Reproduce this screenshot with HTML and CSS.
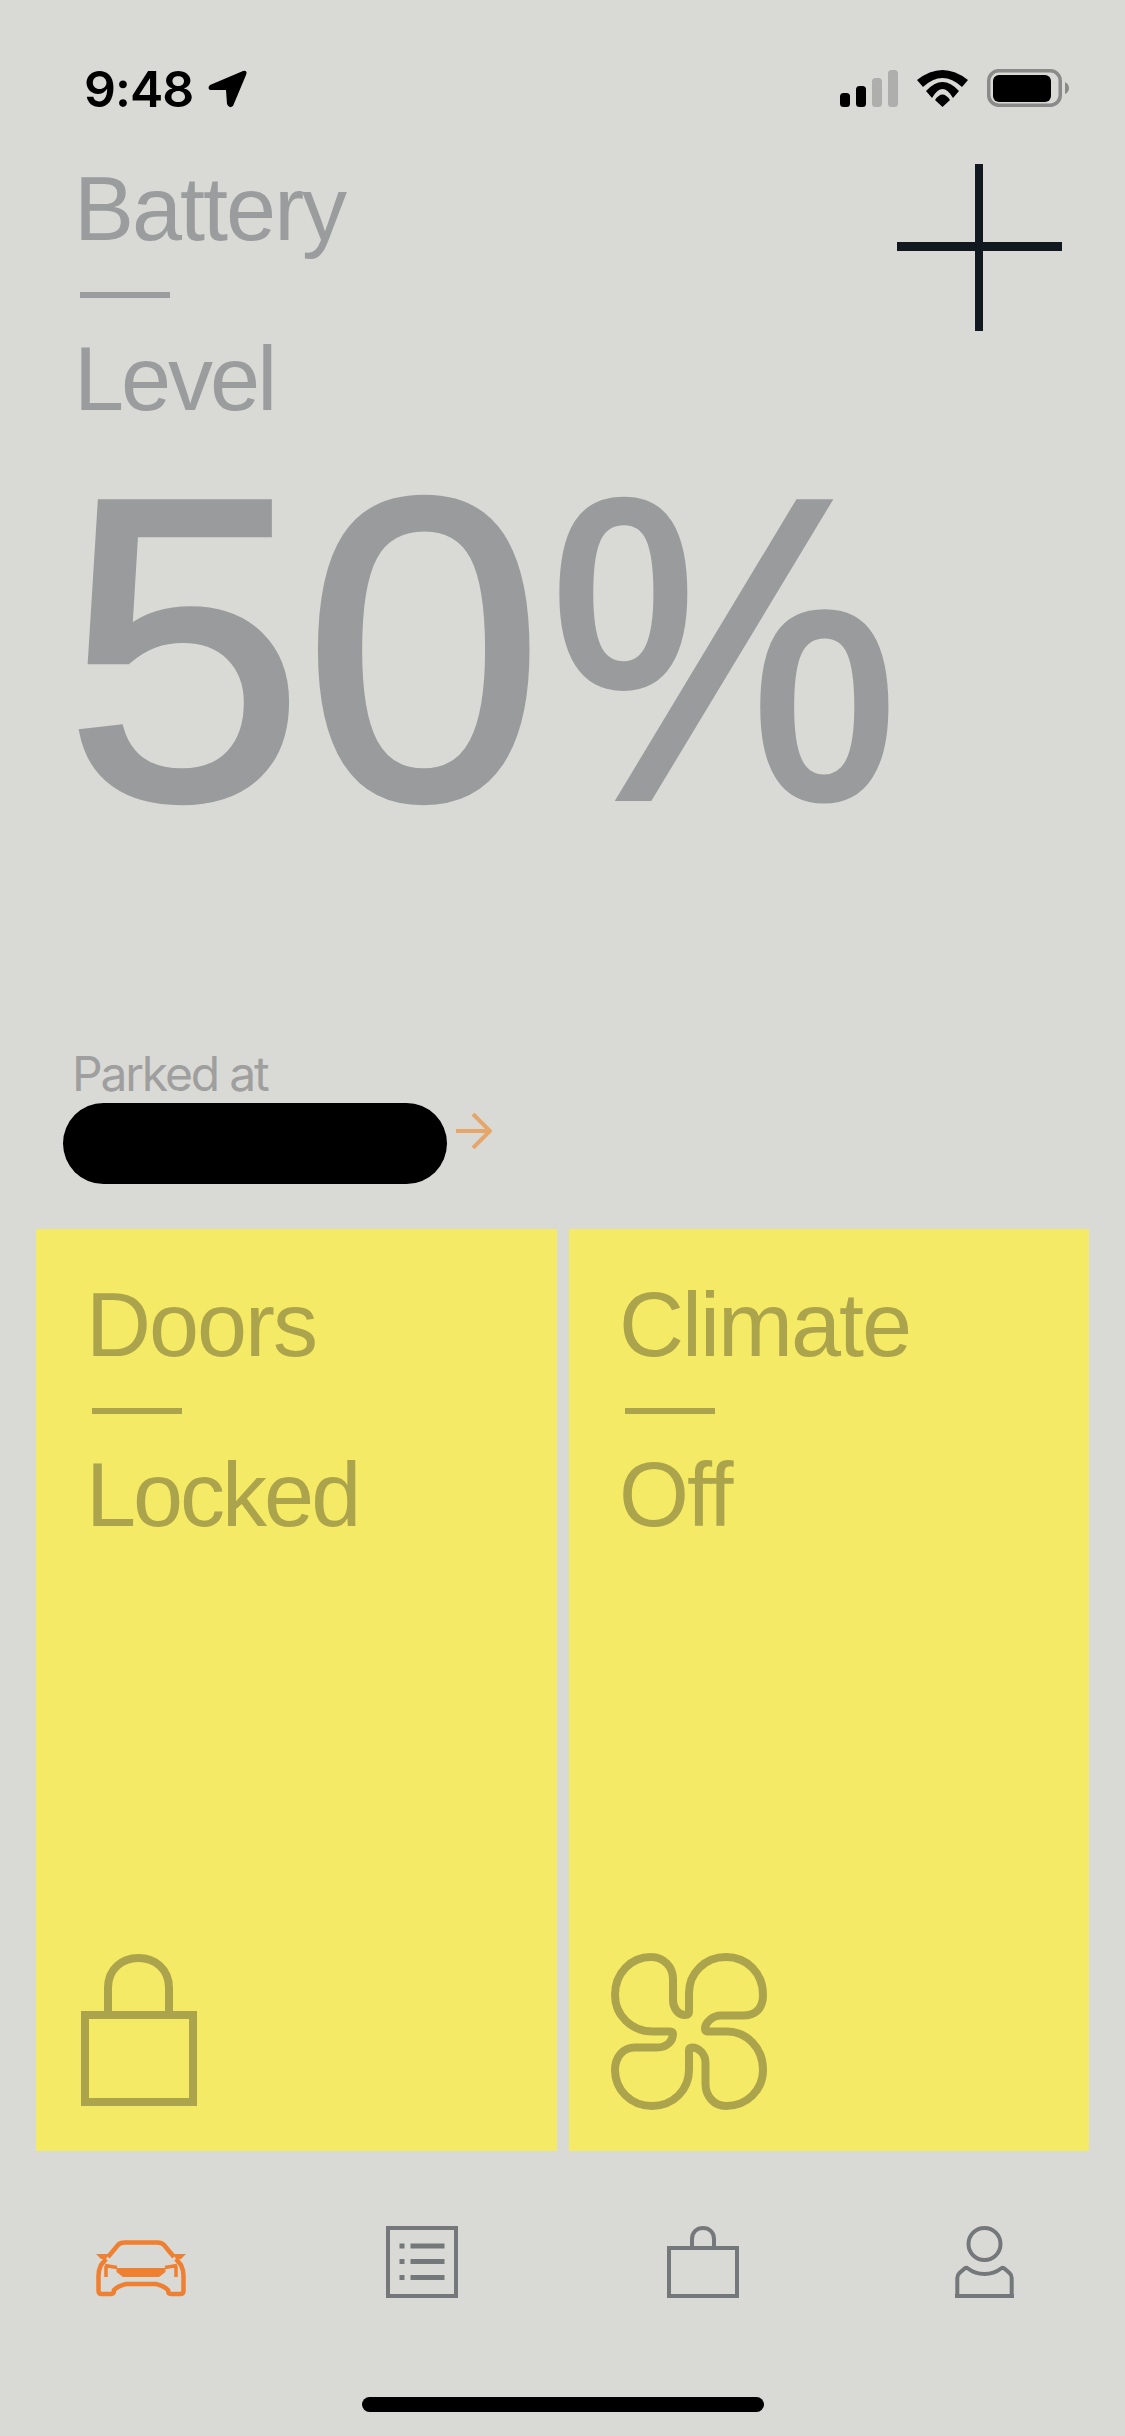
FILE: index.html
```html
<!DOCTYPE html>
<html lang="en">

<head>
    <meta charset="UTF-8">
    <title>Battery</title>
    <link rel="stylesheet" href="styles.css">
</head>

<body>
    <div class="phone">
        <div class="statusbar">
            <div class="clock">
                <span class="time">9:48</span>
                <svg class="locarrow" width="40" height="38" viewBox="0 0 40 38">
                    <path d="M35 1 L2 15 Q-1 18 2 20 L18 20 L19 34 Q21 39 25 36 L38 5 Q40 0 35 1 Z" fill="#000" />
                </svg>
            </div>
            <div class="sysicons">
                <svg width="58" height="38" viewBox="0 0 58 38">
                    <rect x="0" y="23" width="10" height="14" rx="3.5" fill="#000" />
                    <rect x="16" y="16" width="10" height="21" rx="3.5" fill="#000" />
                    <rect x="32" y="8" width="10" height="29" rx="3.5" fill="#aeaeac" />
                    <rect x="48" y="0" width="10" height="37" rx="3.5" fill="#aeaeac" />
                </svg>
                <svg width="51" height="38" viewBox="0 0 51 38">
                    <path d="M0 10 Q25.5 -10 51 10 L45 17 Q25.5 -1 6 17 Z" fill="#000" />
                    <path d="M9 21 Q25.5 3 42 21 L36 28 Q25.5 10 15 28 Z" fill="#000" />
                    <path d="M18 30 Q25.5 19 33 30 L25.5 37 Z" fill="#000" />
                </svg>
                <svg class="batt" width="82" height="38" viewBox="0 0 82 38">
                    <rect x="1.75" y="1.75" width="71.5" height="34.5" rx="10" fill="none" stroke="#8a8a88" stroke-width="3.5" />
                    <rect x="6" y="6" width="58" height="27" rx="6" fill="#000" />
                    <path d="M78 13 Q82 15 82 19 Q82 23 78 25 Z" fill="#8a8a88" />
                </svg>
            </div>
        </div>

        <div class="battery">
            <div class="heading">
                <div class="label">Battery</div>
                <div class="rule"></div>
                <div class="label tight">Level</div>
            </div>
            <svg class="plus" width="165" height="167" viewBox="0 0 165 167">
                <rect x="78" y="0" width="8" height="167" fill="#111820" />
                <rect x="0" y="78" width="165" height="9" fill="#111820" />
            </svg>
        </div>

        <div class="percent">50<span class="percent-sign">%</span></div>

        <div class="parked">
            <div class="parked-label">Parked at</div>
            <div class="parked-row">
                <div class="pill"></div>
                <svg class="go" width="36" height="36" viewBox="0 0 36 36">
                    <path d="M0 18 H34 M17 1 L34 18 L17 35" fill="none" stroke="#e5a66b" stroke-width="4" />
                </svg>
            </div>
        </div>

        <div class="cards">
            <div class="card">
                <div class="label">Doors</div>
                <div class="rule"></div>
                <div class="label tight">Locked</div>
                <svg class="card-icon" width="116" height="152" viewBox="0 0 116 152">
                    <path d="M27 58 V34 C27 15 41 4 57.5 4 C74 4 88 15 88 34 V58" fill="none" stroke="#aca34d" stroke-width="8" />
                    <rect x="4" y="61" width="108" height="87" fill="none" stroke="#aca34d" stroke-width="8" />
                </svg>
            </div>
            <div class="card">
                <div class="label">Climate</div>
                <div class="rule"></div>
                <div class="label">Off</div>
                <svg class="card-icon fan" width="156" height="157" viewBox="0 0 156 157">
                    <path d="M4 42 C4 20 20 4 40 4 C53 4 62 14 62 26 V47 C62 55 67 62 74 62 Q78 62 78 58 V40 C78 20 94 4 115 4 C136 4 152 20 152 42 C152 56 144 62.5 132 62.5 H110 C101 62.5 94 70 94 76 Q94 78.5 97 78.5 H116 C136 78.5 152 95 152 117 C152 137 136 153 115 153 C103 153 94.5 143 94.5 131 V110 C94.5 101 88 94.5 81 94.5 Q78 94.5 78 97 V117 C78 137 62 153 41 153 C20 153 4 137 4 117 C4 104 12 94.5 24 94.5 H46 C56 94.5 62 88 62 81 Q62 78.5 59 78.5 H42 C20 78.5 4 62 4 42 Z" fill="none" stroke="#aca34d" stroke-width="8" stroke-linejoin="round" />
                </svg>
            </div>
        </div>

        <div class="tabbar">
            <svg width="90" height="58" viewBox="0 0 90 58">
                <g fill="none" stroke="#ef7f31" stroke-width="4.5">
                    <path d="M12 17 L22 5 Q24 2.5 29 2.5 H61 Q66 2.5 68 5 L78 17" />
                    <path d="M10 19 L5 25 Q2.5 30 2.5 36 V51 Q2.5 54 6 54 H15 Q18 54 18 50 Q22 46 30 44 H60 Q68 46 72 50 Q72 54 75 54 H84 Q87.5 54 87.5 51 V36 Q87.5 30 85 25 L80 19" />
                    <path d="M9 25.5 L21 27.5 M10 26 V37 M81 25.5 L69 27.5 M80 26 V37" stroke-width="3.5" />
                </g>
                <g fill="#ef7f31">
                    <path d="M0 14 H13 L10 19 H5 Z" />
                    <path d="M90 14 H77 L80 19 H85 Z" />
                    <path d="M20.5 28 H69.5 V32 L63 37 H27 L20.5 32 Z" />
                </g>
            </svg>
            <svg width="72" height="72" viewBox="0 0 72 72">
                <rect x="2" y="2" width="68" height="68" fill="none" stroke="#75787b" stroke-width="4" />
                <g fill="#75787b">
                    <rect x="13.5" y="17.5" width="5" height="5" />
                    <rect x="24.5" y="17.5" width="34" height="5" />
                    <rect x="13.5" y="33" width="5" height="5" />
                    <rect x="24.5" y="33" width="34" height="5" />
                    <rect x="13.5" y="49" width="5" height="5" />
                    <rect x="24.5" y="49" width="34" height="5" />
                </g>
            </svg>
            <svg width="72" height="72" viewBox="0 0 72 72">
                <path d="M25 21 V13 C25 6 30 2 36 2 C42 2 47 6 47 13 V21" fill="none" stroke="#75787b" stroke-width="4" />
                <rect x="2" y="22" width="68" height="48" fill="none" stroke="#75787b" stroke-width="4" />
            </svg>
            <svg width="59" height="72" viewBox="0 0 59 72">
                <circle cx="29.5" cy="18" r="16" fill="none" stroke="#75787b" stroke-width="4" />
                <path d="M2.3 72 V52 Q2.3 49 4.5 47 L9 43 Q11 41 13 42.5 Q20 48 29.5 48 Q39 48 46 42.5 Q48 41 50 43 L54.5 47 Q56.7 49 56.7 52 V72 M0 70 H59" fill="none" stroke="#75787b" stroke-width="4" />
            </svg>
        </div>

        <div class="homebar"></div>
    </div>
</body>

</html>
```

FILE: styles.css
```css
* {
    box-sizing: border-box;
}

html,
body {
    margin: 0;
    padding: 0;
}

body {
    background-color: #d9dad5;
    font-family: "Liberation Sans", Arial, sans-serif;
}

.phone {
    width: 1125px;
    height: 2436px;
    overflow: hidden;
    display: flex;
    flex-direction: column;
}

/* status bar */
.statusbar {
    height: 70px;
    margin-top: 70px;
    padding: 0 56px 0 84px;
    display: flex;
    justify-content: space-between;
    align-items: flex-start;
}

.clock {
    display: flex;
    align-items: center;
    gap: 15px;
    height: 38px;
}

.time {
    font-family: Inter, sans-serif;
    font-weight: 600;
    font-size: 50px;
    line-height: 38px;
    color: #000;
    letter-spacing: -1px;
}

.sysicons {
    display: flex;
    gap: 19px;
    align-items: flex-start;
}

.batt {
    margin-top: -1px;
}

/* battery heading */
.battery {
    height: 273px;
    margin-top: 24px;
    padding: 0 63px 0 74px;
    display: flex;
    justify-content: space-between;
    align-items: flex-start;
}

.label {
    font-size: 90px;
    line-height: 90px;
    letter-spacing: -2px;
    color: #9b9c9e;
}

.label.tight {
    letter-spacing: -3px;
}

.rule {
    width: 90px;
    height: 6px;
    margin: 38px 0 36px 6px;
    background-color: #9b9c9e;
}

.percent {
    height: 613px;
    padding-left: 65px;
    font-size: 430px;
    line-height: 425px;
    color: #9a9b9d;
    -webkit-text-stroke: 6px #9a9b9d;
}

.percent-sign {
    display: inline-block;
    margin-left: 5px;
    transform: scaleX(0.92);
    transform-origin: left;
}

/* parked */
.parked {
    padding-left: 63px;
}

.parked-label {
    padding-left: 9px;
    font-family: Inter, sans-serif;
    font-weight: 400;
    font-size: 48px;
    line-height: 48px;
    letter-spacing: -2.2px;
    color: #9f9f9f;
}

.parked-row {
    display: flex;
    align-items: flex-start;
    gap: 9px;
    margin-top: 5px;
}

.pill {
    width: 384px;
    height: 81px;
    border-radius: 41px;
    background-color: #000;
}

.go {
    margin-top: 10px;
}

/* cards */
.cards {
    display: grid;
    grid-template-columns: 521px 520px;
    gap: 12px;
    padding: 0 36px;
    margin-top: 45px;
}

.card {
    height: 922px;
    padding: 51px 0 0 50px;
    background-color: #f5ea66;
    position: relative;
}

.card .label {
    color: #aca34d;
}

.card .rule {
    background-color: #aca34d;
}

.card-icon {
    position: absolute;
    left: 45px;
    bottom: 45px;
}

.card-icon.fan {
    left: 42px;
    bottom: 41px;
}

/* tab bar */
.tabbar {
    margin-top: 75px;
    height: 72px;
    display: grid;
    grid-template-columns: repeat(4, 1fr);
    justify-items: center;
    align-items: end;
}

.homebar {
    width: 402px;
    height: 15px;
    margin: 99px 0 0 362px;
    border-radius: 8px;
    background-color: #000;
}
```
